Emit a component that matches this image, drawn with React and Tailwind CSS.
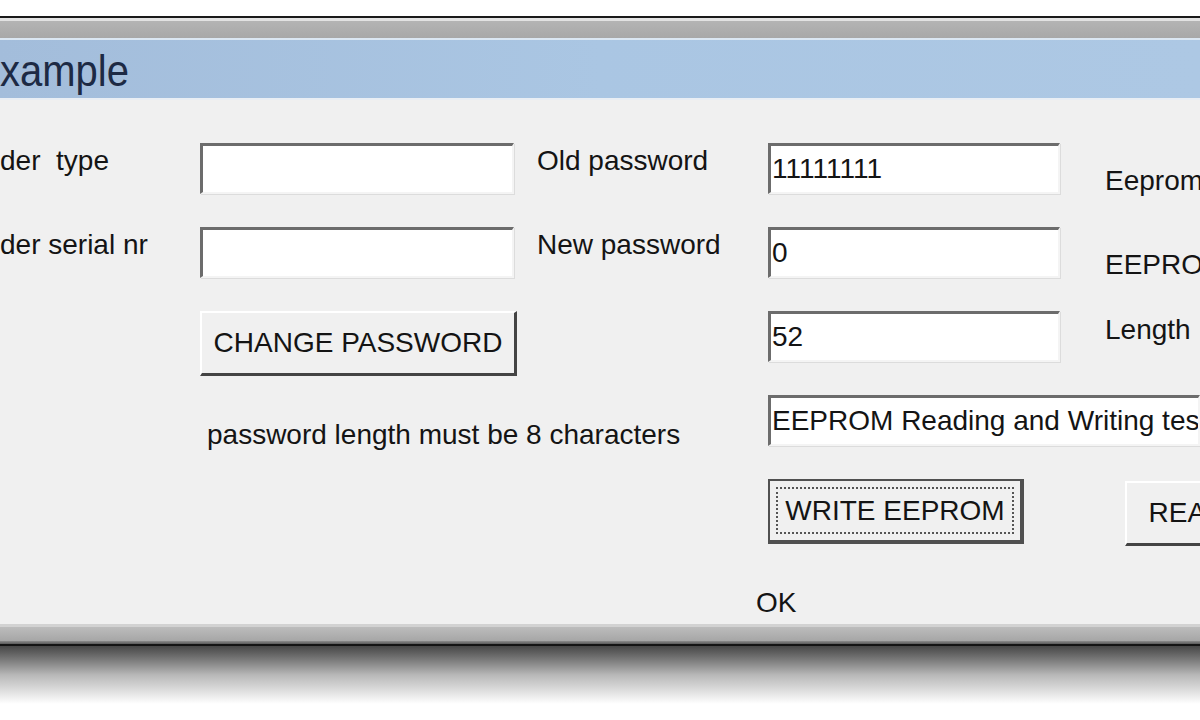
import React from 'react';

const font = "font-['Liberation_Sans',Arial,sans-serif]";

const Field = ({ value, width = 'w-[292px]' }) => (
    <div
        className={`${width} h-[51px] bg-white border-t-[3px] border-l-[3px] border-t-[#6c6c6c] border-l-[#6c6c6c] border-r-2 border-b-2 border-r-[#f4f4f4] border-b-[#f4f4f4] shadow-[1px_1px_0_#dcdcdc] pl-[1px] pt-[9px] text-[28px] leading-[28px] whitespace-nowrap overflow-hidden`}
    >
        {value}
    </div>
);

const Button = ({ label, width, focused }) => {
    if (focused) {
        return (
            <div className={`${width} h-[65px] border-2 border-[#505050] border-r-[4px] border-b-[4px] bg-[#f0f0f0] p-[6px]`}>
                <div className="h-full border-2 border-dotted border-[#555] flex items-center justify-center text-[28px] leading-[28px] whitespace-nowrap">
                    {label}
                </div>
            </div>
        );
    }
    return (
        <div className={`${width} h-[65px] border-t-2 border-l-2 border-t-white border-l-white border-r-[3px] border-b-[3px] border-r-[#444] border-b-[#444] bg-[#f0f0f0] flex items-center justify-center text-[28px] leading-[28px] whitespace-nowrap`}>
            {label}
        </div>
    );
};

const Label = ({ children, className = '' }) => (
    <div className={`text-[28px] leading-[28px] whitespace-pre ${className}`}>{children}</div>
);

export default function App() {
    return (
        <div className={`w-[1200px] h-[720px] overflow-hidden bg-white ${font} text-[#141414]`}>
            <div className="h-[16px] bg-white" />
            <div className="h-[2px] bg-[#1a1a1a]" />
            <div className="h-[3px] bg-[#e2e2e2]" />
            <div className="h-[17px] bg-linear-to-b from-[#b4b4b4] to-[#a8a8a8]" />
            <div className="h-[2px] bg-[#dbe7f3]" />
            <div className="h-[58px] bg-linear-to-r from-[#a3bddb] via-[#aac6e3] to-[#adc8e4] flex items-center">
                <span className="text-[40px] leading-[40px] text-[#1d2a44] mt-[3px] scale-y-110">xample</span>
            </div>
            <div className="h-[2px] bg-[#e9eef4]" />

            <div className="h-[524px] bg-[#f0f0f0] pt-[43px] overflow-hidden">
                <div className="grid grid-cols-[200px_337px_231px_337px_95px] grid-rows-[84px_84px_84px_84px_84px_60px]">
                    <Label className="mt-[4px]">{'der  type'}</Label>
                    <Field value="" width="w-[314px]" />
                    <Label className="mt-[4px]">Old password</Label>
                    <Field value="11111111" />
                    <Label className="mt-[24px]">Eeprom</Label>

                    <Label className="mt-[4px]">der serial nr</Label>
                    <Field value="" width="w-[314px]" />
                    <Label className="mt-[4px]">New password</Label>
                    <Field value="0" />
                    <Label className="mt-[24px]">EEPRO</Label>

                    <div />
                    <Button label="CHANGE PASSWORD" width="w-[317px]" />
                    <div />
                    <Field value="52" />
                    <Label className="mt-[5px]">Length</Label>

                    <div />
                    <Label className="col-span-2 mt-[26px] ml-[7px]">password length must be 8 characters</Label>
                    <div className="col-span-2">
                        <Field value="EEPROM Reading and Writing tes" width="w-[432px]" />
                    </div>

                    <div />
                    <div />
                    <div />
                    <Button label="WRITE EEPROM" width="w-[256px]" focused />
                    <div className="ml-[20px] mt-[2px]">
                        <Button label="READ EEPROM" width="w-[255px]" />
                    </div>

                    <div />
                    <div />
                    <div />
                    <Label className="mt-[26px] -ml-[12px]">OK</Label>
                </div>
            </div>

            <div className="h-[3px] bg-[#d2d2d2]" />
            <div className="h-[14px] bg-linear-to-b from-[#bcbcbc] to-[#a6a6a6]" />
            <div className="h-[3px] bg-linear-to-b from-[#8c8c8c] to-[#5a5a5a]" />
            <div className="h-[2px] bg-[#141414]" />
            <div className="h-[58px] bg-linear-to-b from-[#474747] via-[#b8b8b8] to-white" />
        </div>
    );
}
